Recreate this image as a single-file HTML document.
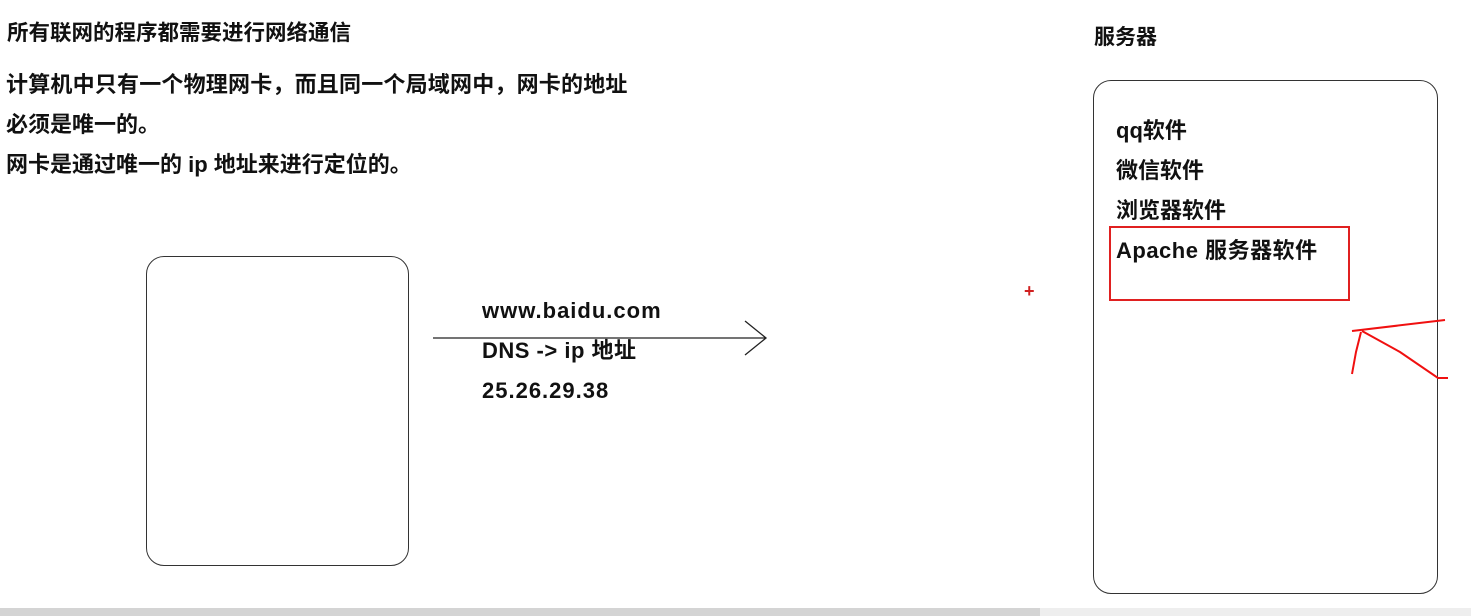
<!DOCTYPE html>
<html><head><meta charset="utf-8"><style>
body{margin:0;width:1471px;height:616px;background:#fff;position:relative;overflow:hidden;font-family:"Liberation Sans","Noto Sans CJK SC",sans-serif;color:#111;}
.t{position:absolute;white-space:nowrap;font-weight:bold;font-size:22px;line-height:24px;}
.box{position:absolute;border:1.5px solid #333;border-radius:18px;}
</style></head><body>
<div class="t" style="left:7px;top:21px;font-size:21.5px;font-weight:600;">所有联网的程序都需要进行网络通信</div>
<div class="t" style="left:6px;top:73px;letter-spacing:0.2px;">计算机中只有一个物理网卡，而且同一个局域网中，网卡的地址</div>
<div class="t" style="left:6px;top:113px;">必须是唯一的。</div>
<div class="t" style="left:6px;top:153px;">网卡是通过唯一的 ip 地址来进行定位的。</div>
<div class="t" style="left:1094px;top:26px;font-size:21px;">服务器</div>
<div class="box" style="left:146px;top:256px;width:261px;height:308px;"></div>
<div class="box" style="left:1093px;top:80px;width:343px;height:512px;"></div>
<div class="t" style="left:482px;top:299px;letter-spacing:1px;">www.baidu.com</div>
<div class="t" style="left:482px;top:339px;letter-spacing:0.5px;">DNS -&gt; ip 地址</div>
<div class="t" style="left:482px;top:379px;letter-spacing:1px;">25.26.29.38</div>
<div class="t" style="left:1116px;top:119px;">qq软件</div>
<div class="t" style="left:1116px;top:159px;">微信软件</div>
<div class="t" style="left:1116px;top:199px;">浏览器软件</div>
<div class="t" style="left:1116px;top:239px;letter-spacing:0.5px;">Apache 服务器软件</div>
<div style="position:absolute;left:1109px;top:226px;width:237px;height:71px;border:2px solid #e02020;"></div>
<div style="position:absolute;left:1024px;top:281px;color:#d02020;font-size:18px;font-weight:bold;">+</div>
<svg style="position:absolute;left:0;top:0" width="1471" height="616">
<path d="M433 338 H765 M745 321 L766 338 L745 355" fill="none" stroke="#222" stroke-width="1.3"/>
<path d="M1352 331 L1445 320 M1362 331 L1400 352 L1438 378 L1448 378 M1361 332 L1356 352 L1352 374" fill="none" stroke="#f01010" stroke-width="2"/>
</svg>
<div style="position:absolute;left:0;top:608px;width:1040px;height:8px;background:#d4d4d4;"></div>
<div style="position:absolute;left:1040px;top:608px;width:431px;height:8px;background:#eee;"></div>
</body></html>
